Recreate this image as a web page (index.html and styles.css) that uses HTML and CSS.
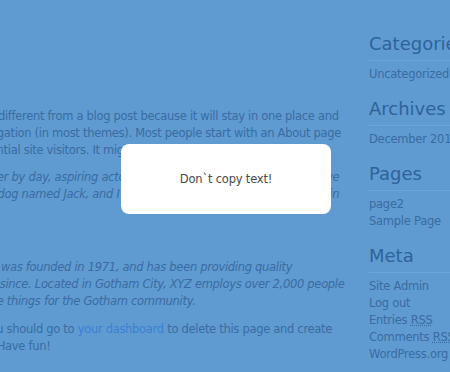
FILE: index.html
```html
<!DOCTYPE html>
<html lang="en">
<head>
    <meta charset="utf-8">
    <title>Sample Page</title>
    <link rel="stylesheet" href="styles.css">
</head>
<body>
    <div id="page">
        <div id="content">
            <p class="entry">This is an example page. It's different from a blog post because it will stay in one place and<br>will show up in your site navigation (in most themes). Most people start with an About page<br>that introduces them to potential site visitors. It might say something like this:</p>
            <blockquote class="entry quote">Hi there! I'm a bike messenger by day, aspiring actor by night, and this is my website. I live<br>in Los Angeles, have a great dog named Jack, and I like piña coladas. (And gettin' caught in<br>the rain.)</blockquote>
            <p class="entry">...or something like this:</p>
            <blockquote class="entry quote company">The XYZ Doohickey Company was founded in 1971, and has been providing quality<br>doohickeys to the public ever since. Located in Gotham City, XYZ employs over 2,000 people<br>and does all kinds of awesome things for the Gotham community.</blockquote>
            <p class="entry">As a new WordPress user, you should go to <a href="#">your dashboard</a> to delete this page and create<br>new pages for your content. Have fun!</p>
        </div>
        <div id="sidebar">
            <div class="widget">
                <h3 class="widget-title">Categories</h3>
                <ul><li>Uncategorized</li></ul>
            </div>
            <div class="widget">
                <h3 class="widget-title">Archives</h3>
                <ul><li>December 2012</li></ul>
            </div>
            <div class="widget">
                <h3 class="widget-title">Pages</h3>
                <ul><li>page2</li><li>Sample Page</li></ul>
            </div>
            <div class="widget">
                <h3 class="widget-title">Meta</h3>
                <ul>
                    <li>Site Admin</li>
                    <li>Log out</li>
                    <li>Entries <abbr>RSS</abbr></li>
                    <li>Comments <abbr>RSS</abbr></li>
                    <li>WordPress.org</li>
                </ul>
            </div>
        </div>
    </div>

    <div id="copy-alert">Don`t copy text!</div>
</body>
</html>
```

FILE: styles.css
```css
html,body{
    margin: 0;
    background-color: #5f9bd0;
    overflow: hidden;
    height: 100%;
}

#page{
    display: flex;
    margin-left: -161px;
    font-family: "DejaVu Sans", Verdana, sans-serif;
    font-size: 11.5px;
    letter-spacing: -0.3px;
    line-height: 17px;
    color: #3a6ba3;
}

#content{
    width: 512px;
    flex: none;
    overflow: hidden;
    padding-top: 108px;
    white-space: nowrap;
}
#content .entry{
    margin: 0 0 10px 0;
}
#content .quote{
    font-style: italic;
    margin: 0 0 11px 0;
}
#content .company{
    margin-left: -4px;
}
#content .quote + .entry{
    margin-bottom: 11px;
}
#content a{
    color: #3b7fd3;
    text-decoration: none;
}

#sidebar{
    flex: none;
    width: 240px;
    margin-left: 18px;
    padding-top: 32px;
    white-space: nowrap;
    letter-spacing: -0.25px;
}
#sidebar .widget{
    margin-bottom: 14px;
}
#sidebar .widget-title{
    margin: 0 0 5px 0;
    padding-bottom: 4px;
    border-bottom: 1px solid #6ea5d6;
    font-size: 18px;
    line-height: 24px;
    letter-spacing: 0;
    font-weight: normal;
    color: #2f629c;
}
#sidebar ul{
    list-style: none;
    margin: 0;
    padding: 0;
}
#sidebar abbr{
    text-decoration: underline dotted;
}

#copy-alert{
    position: fixed;
    left: 121px;
    top: 144px;
    width: 210px;
    height: 70px;
    display: flex;
    align-items: center;
    justify-content: center;
    background-color: white;
    border-radius: 8px;
    font-family: "DejaVu Sans", Verdana, sans-serif;
    font-size: 11.5px;
    letter-spacing: -0.2px;
    color: #4a4a4a;
}
```
